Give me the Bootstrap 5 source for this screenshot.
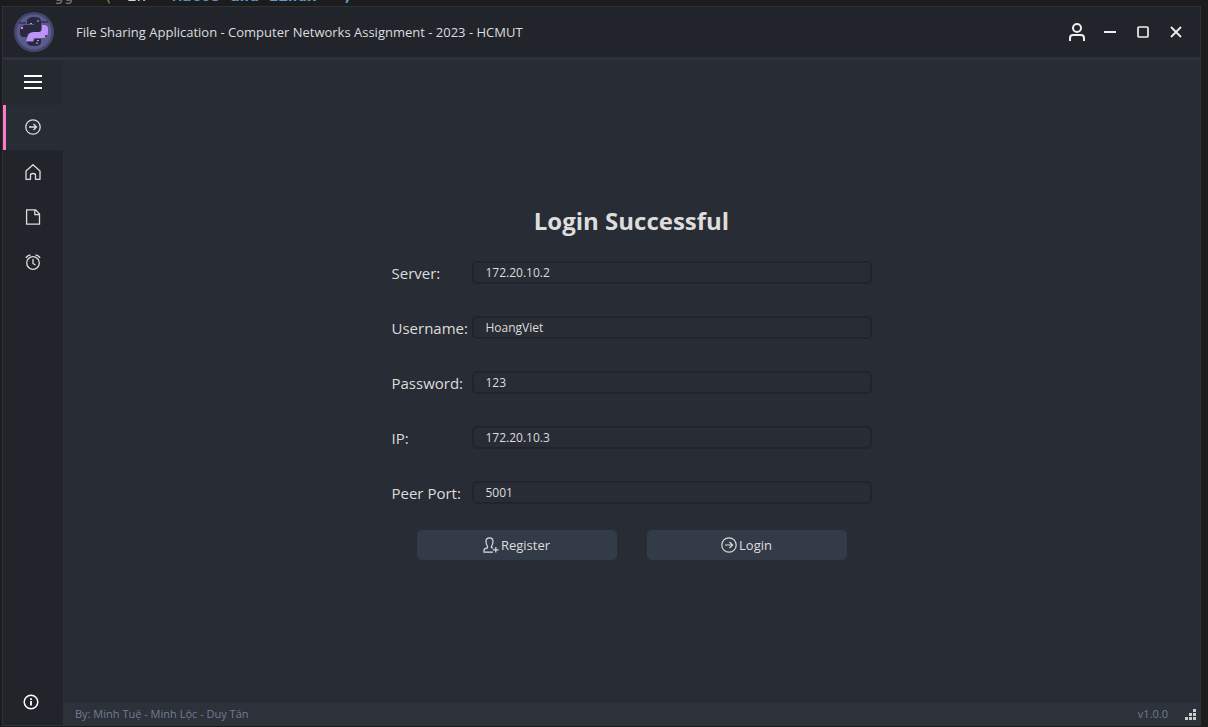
<!DOCTYPE html>
<html lang="en" data-bs-theme="dark">
<head>
<meta charset="utf-8">
<meta name="viewport" content="width=device-width, initial-scale=1">
<title>File Sharing Application</title>
<link href="https://cdn.jsdelivr.net/npm/bootstrap@5.3.0/dist/css/bootstrap.min.css" rel="stylesheet">
<style>
  body { background: #1c1c1c; color: #ddd; font: 13px/20px "Open Sans", "Noto Sans", sans-serif; }
  .line-icon { display: block; fill: none; stroke: currentColor; }
  .editor-strip { height: 6px; padding-left: 54px; gap: 14px; font: 16px/20px "DejaVu Sans Mono", monospace; color: #777; }
  .editor-strip b { color: #569cd6; margin-left: 12px; }
  .editor-strip .paren { color: #6a9955; margin-left: 16px; }
  .editor-strip .plain { color: #d4d4d4; }
  .app-window { margin: 0 7px 1px 2px; border: 1px solid #2c313a; background: #282c34; }
  .title-bar { height: 53px; background: #21252b; border-bottom: 3px solid #2c313a; padding: 0 8px 0 11px; gap: 22px; }
  .win-btn { width: 33px; height: 32px; padding: 0; border: 0; background: none; color: #eee; display: grid; place-items: center; }
  .side-bar { width: 60px; background: #21252b; }
  .side-btn { height: 45px; padding: 0 0 2px; border: 0; background: none; color: #ddd; display: grid; place-items: center; }
  .side-top { background: #252930; color: #fff; }
  .side-btn.active { background: #282c34; border-left: 3px solid #ff79c6; padding-right: 3px; }
  .side-info { color: #fff; padding-right: 4px; }
  .login-form { width: 480px; max-width: 100%; }
  .login-form h1 { font-size: 24px; line-height: 36px; font-weight: 700; margin-bottom: 22px; color: #ddd; }
  .field-list { display: grid; gap: 32px; }
  .field-row label { width: 80px; font-size: 15px; white-space: nowrap; }
  .field-row .form-control { height: 23px; min-height: 0; padding: 0 12px; border: 2px solid #21252b; border-radius: 5px; background: #282c34; color: #ddd; font-size: 12px; line-height: 19px; }
  .form-actions { gap: 30px; margin-top: 26px; }
  .action-btn { width: 200px; height: 30px; padding: 0; gap: 2px; border: 0; border-radius: 5px; background: #343b48; color: #ddd; font-size: 13px; }
  .status-bar { height: 22px; background: #2c313a; color: #717e95; font-size: 11px; padding: 0 3px 0 12px; }
  .size-grip { fill: #ccc; }
</style>
</head>
<body class="vh-100 d-flex flex-column overflow-hidden">
<div class="editor-strip d-flex align-items-end overflow-hidden" aria-hidden="true"><span>gg</span><span class="paren">(</span><span class="plain">in</span><b>Macos and Linux</b><b>;</b></div>
<div class="app-window d-flex flex-column flex-grow-1">
  <header class="title-bar d-flex align-items-center flex-shrink-0">
    <svg width="40" height="40" viewBox="0 0 40 40" role="img" aria-label="Application logo">
      <circle cx="20" cy="20" r="20" fill="#44446d"/>
      <circle cx="20" cy="20" r="17.500" fill="#5b5a8c"/>
      <path d="M5 10h7v2H5zm22-1h7v2h-7z" fill="#3b3b60"/>
      <path d="M13 9q0-4 7-4t7 4v8q0 4-4 4h-6q-4 0-4 4H9q-4-1-3-7 0-4 5-5h9v-1h-7z" fill="#282940"/>
      <path d="M28 13h3q4 1 3 7 0 5-4 6H20l-1 3h-7l2-5q1-4 6-4h5q3 0 3-4z" fill="#bd93f9"/>
      <path d="M13 30h6l2-3h6v3q0 4-7 4t-7-4z" fill="#282940"/>
      <path d="M7 15h2v2H7zm9-4h2v1h-2zm7 17h2v1h-2z" fill="#ff79c6"/>
      <circle cx="24" cy="9" r="1" fill="#8587a8"/><circle cx="23" cy="31" r="1" fill="#8587a8"/><circle cx="32" cy="24" r="1" fill="#282940"/>
    </svg>
    <div class="flex-grow-1 text-truncate">File Sharing Application - Computer Networks Assignment - 2023 - HCMUT</div>
    <div class="d-flex">
      <button type="button" class="win-btn" aria-label="Account"><svg class="line-icon" width="18" height="20" viewBox="0 0 18 20" stroke-width="2"><circle cx="9" cy="6" r="4"/><path d="M2 19v-3q0-3 3-3h8q3 0 3 3v3"/></svg></button>
      <button type="button" class="win-btn" aria-label="Minimize"><svg class="line-icon" width="12" height="12" viewBox="0 0 12 12" stroke-width="2"><path d="M0 6h12"/></svg></button>
      <button type="button" class="win-btn" aria-label="Maximize"><svg class="line-icon" width="12" height="12" viewBox="0 0 12 12" stroke-width="1.7"><rect x="1" y="1" width="10" height="10" rx="1"/></svg></button>
      <button type="button" class="win-btn" aria-label="Close"><svg class="line-icon" width="12" height="12" viewBox="0 0 12 12" stroke-width="1.8"><path d="M1 1l10 10M11 1L1 11"/></svg></button>
    </div>
  </header>
  <div class="d-flex flex-grow-1">
    <nav class="side-bar d-flex flex-column flex-shrink-0" aria-label="Main">
      <button type="button" class="side-btn side-top" aria-label="Toggle menu"><svg class="line-icon" width="20" height="16" viewBox="0 0 20 16" stroke-width="2"><path d="M1 2h18M1 8h18M1 14h18"/></svg></button>
      <button type="button" class="side-btn active" aria-label="Login page"><svg class="line-icon" width="16" height="16" viewBox="0 0 16 16" stroke-width="1.3"><circle cx="8" cy="8" r="7.2"/><path d="M4 8h7.5M8.500 5l3 3-3 3"/></svg></button>
      <button type="button" class="side-btn" aria-label="Home"><svg class="line-icon" width="16" height="16" viewBox="0 0 16 16" stroke-width="1.3" stroke-linejoin="round"><path d="M1 7l7-6.300L15 7v8.300h-4.500V11q0-1.500-2.500-1.500T5.500 11v4.300H1z"/></svg></button>
      <button type="button" class="side-btn" aria-label="Files"><svg class="line-icon" width="16" height="16" viewBox="0 0 16 16" stroke-width="1.3"><path d="M1.600.8h9L14.500 5v10.200H1.600zM9.800.8v4.800h4.700"/></svg></button>
      <button type="button" class="side-btn" aria-label="History"><svg class="line-icon" width="16" height="16" viewBox="0 0 16 16" stroke-width="1.3"><circle cx="8" cy="9" r="6.300"/><path d="M8 5v4.500l2.500 1.500M1 4q1-2.500 4.500-3.200M15 4q-1-2.500-4.500-3.200"/></svg></button>
      <button type="button" class="side-btn side-info mt-auto" aria-label="About"><svg class="line-icon" width="16" height="16" viewBox="0 0 16 16" stroke-width="1.500"><circle cx="8" cy="8" r="6.800"/><path d="M8 7v4.500M8 4.300v1.700" stroke-width="1.800"/></svg></button>
    </nav>
    <div class="d-flex flex-column flex-grow-1">
      <main class="flex-grow-1 d-flex align-items-center justify-content-center">
        <form class="login-form">
          <h1 class="text-center">Login Successful</h1>
          <div class="field-list">
            <div class="field-row d-flex align-items-center"><label class="flex-shrink-0" for="server">Server:</label><input id="server" class="form-control" type="text" value="172.20.10.2"></div>
            <div class="field-row d-flex align-items-center"><label class="flex-shrink-0" for="user">Username:</label><input id="user" class="form-control" type="text" value="HoangViet"></div>
            <div class="field-row d-flex align-items-center"><label class="flex-shrink-0" for="pass">Password:</label><input id="pass" class="form-control" type="text" value="123"></div>
            <div class="field-row d-flex align-items-center"><label class="flex-shrink-0" for="ip">IP:</label><input id="ip" class="form-control" type="text" value="172.20.10.3"></div>
            <div class="field-row d-flex align-items-center"><label class="flex-shrink-0" for="port">Peer Port:</label><input id="port" class="form-control" type="text" value="5001"></div>
          </div>
          <div class="form-actions d-flex justify-content-center">
            <button type="button" class="action-btn d-flex align-items-center justify-content-center"><svg class="line-icon" width="16" height="16" viewBox="0 0 16 16" stroke-width="1.200"><path d="M10 15.200H1V13q0-1.500 3.500-2.200V9.300Q3 7.500 3 4.500 3 .8 6.500.8T10 4.500q0 3-1.500 4.800v1.200l1.500.6M12.800 10v5.500M10 12.800h5.500"/></svg>Register</button>
            <button type="button" class="action-btn d-flex align-items-center justify-content-center"><svg class="line-icon" width="16" height="16" viewBox="0 0 16 16" stroke-width="1.200"><circle cx="8" cy="8" r="7.200"/><path d="M4 8h7.500M8.500 5l3 3-3 3"/></svg>Login</button>
          </div>
        </form>
      </main>
      <footer class="status-bar d-flex align-items-center">
        <span>By: Minh Tuệ - Minh Lộc - Duy Tân</span>
        <span class="ms-auto me-3">v1.0.0</span>
        <svg class="size-grip" width="13" height="12" viewBox="0 0 13 12" aria-hidden="true"><path d="M9 1h3v3H9zM5 5h3v3H5zm4 0h3v3H9zM1 9h3v3H1zm4 0h3v3H5zm4 0h3v3H9z"/></svg>
      </footer>
    </div>
  </div>
</div>
<script src="https://cdn.jsdelivr.net/npm/bootstrap@5.3.0/dist/js/bootstrap.bundle.min.js"></script>
</body>
</html>
